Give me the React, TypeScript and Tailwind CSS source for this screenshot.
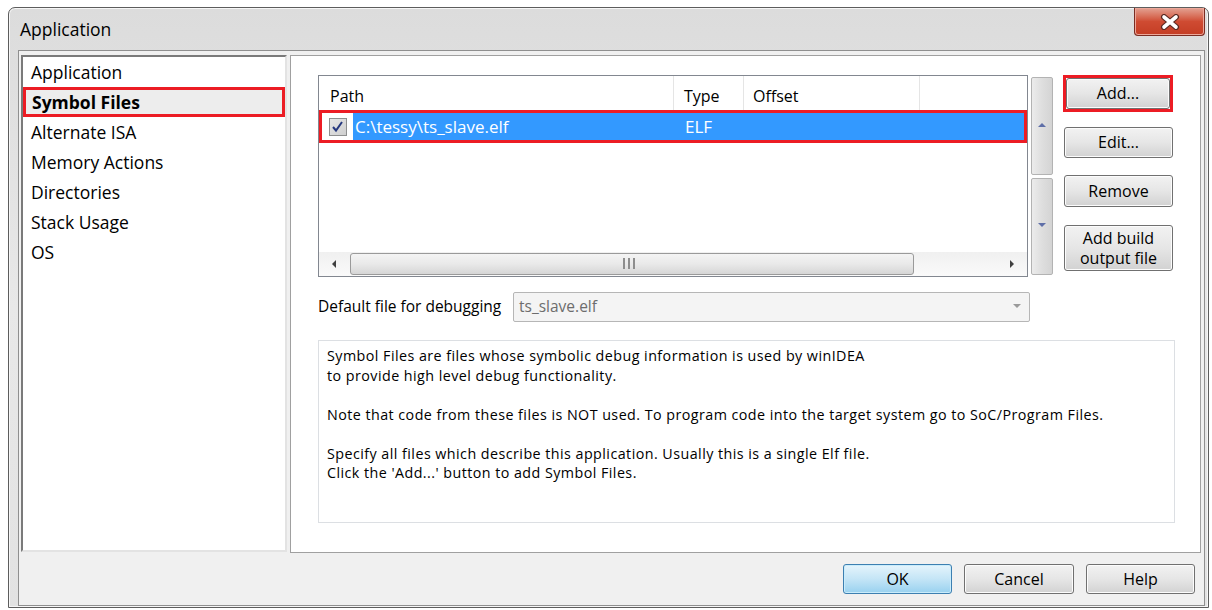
import React from 'react';

const pages = [
  'Application',
  'Symbol Files',
  'Alternate ISA',
  'Memory Actions',
  'Directories',
  'Stack Usage',
  'OS',
];

const helpLines = [
  'Symbol Files are files whose symbolic debug information is used by winIDEA',
  'to provide high level debug functionality.',
  '',
  'Note that code from these files is NOT used. To program code into the target system go to SoC/Program Files.',
  '',
  'Specify all files which describe this application. Usually this is a single Elf file.',
  "Click the 'Add...' button to add Symbol Files.",
];

const PushButton: React.FC<{ className?: string; children: React.ReactNode }> = ({
  className = '',
  children,
}) => (
  <button
    type="button"
    className={`flex items-center justify-center rounded-[3px] border border-[#707070] bg-gradient-to-b from-[#f2f2f2] via-[#e6e6e6] to-[#d2d2d2] text-[16px] leading-[19px] text-black shadow-[inset_0_0_0_1px_#fcfcfc] ${className}`}
  >
    {children}
  </button>
);

const CloseGlyph = () => (
  <svg width="22" height="16" viewBox="0 0 22 16">
    <path d="M5 3 L17 13 M17 3 L5 13" stroke="#5a2a22" strokeWidth="6" strokeLinecap="round" />
    <path d="M5 3 L17 13 M17 3 L5 13" stroke="#ffffff" strokeWidth="3.6" strokeLinecap="round" />
  </svg>
);

const Triangle: React.FC<{ dir: 'up' | 'down' | 'left' | 'right'; color: string }> = ({ dir, color }) => {
  const points = {
    up: '0,5 4,1 8,5',
    down: '0,1 4,5 8,1',
    left: '5,0 1,4 5,8',
    right: '1,0 5,4 1,8',
  }[dir];
  return (
    <svg width="8" height="8" viewBox="0 0 8 8">
      <polygon points={points} fill={color} />
    </svg>
  );
};

const SymbolTable = () => (
  <div className="flex h-[202px] w-[710px] flex-col border border-[#828790] bg-white">
    {/* column header */}
    <div className="flex h-[34px] shrink-0 text-[16px] text-black">
      <div className="flex w-[355px] items-center border-r border-[#e5e5e5] pl-[11px] pt-[6px]">Path</div>
      <div className="flex w-[70px] items-center border-r border-[#e5e5e5] pl-[10px] pt-[6px]">Type</div>
      <div className="flex w-[176px] items-center border-r border-[#e5e5e5] pl-[9px] pt-[6px]">Offset</div>
      <div className="flex-1" />
    </div>
    {/* selected entry */}
    <div className="flex h-[33px] shrink-0 border-[3px] border-[#ec1c24]">
      <div className="flex w-[31px] items-center justify-center bg-white">
        <span className="flex h-[18px] w-[18px] items-center justify-center border border-[#8e8f8f] bg-gradient-to-br from-[#e6e6e6] to-[#cfcfcf]">
          <svg width="13" height="13" viewBox="0 0 13 13">
            <path d="M2 7 L5 10.5 L11 2" fill="none" stroke="#26387f" strokeWidth="2" />
          </svg>
        </span>
      </div>
      <div className="flex flex-1 items-center bg-[#3399ff] text-[17px] text-white">
        <span className="w-[321px] pl-[2px]">C:\tessy\ts_slave.elf</span>
        <span className="pl-[11px]">ELF</span>
      </div>
    </div>
    <div className="flex-1" />
    {/* horizontal scrollbar */}
    <div className="flex h-[24px] shrink-0 items-center bg-gradient-to-b from-[#f0f0f0] to-[#fafafa]">
      <div className="flex w-[31px] items-center justify-center">
        <Triangle dir="left" color="#404040" />
      </div>
      <div className="relative h-[22px] w-[564px] rounded-[3px] border border-[#9a9a9a] bg-gradient-to-b from-[#f4f4f4] via-[#e9e9e9] to-[#d6d6d6]">
        <span className="absolute left-[272px] top-[4px] h-[11px] w-[12px] border-x-[2px] border-[#8d8d8d] after:absolute after:left-[3px] after:top-0 after:h-[11px] after:w-[2px] after:bg-[#8d8d8d]" />
      </div>
      <div className="flex-1" />
      <div className="flex w-[28px] items-center justify-center">
        <Triangle dir="right" color="#404040" />
      </div>
    </div>
  </div>
);

const Spinner = () => (
  <div className="ml-[3px] mt-[2px] flex h-[198px] w-[22px] flex-col gap-[3px]">
    <div className="flex flex-1 items-center justify-center rounded-[2px] border border-[#b3b3b3] bg-gradient-to-r from-[#ececec] via-[#dedede] to-[#d4d4d4]">
      <Triangle dir="up" color="#5f6fa8" />
    </div>
    <div className="flex flex-1 items-center justify-center rounded-[2px] border border-[#b3b3b3] bg-gradient-to-r from-[#ececec] via-[#dedede] to-[#d4d4d4]">
      <Triangle dir="down" color="#5f6fa8" />
    </div>
  </div>
);

export default function App() {
  return (
    <div className="h-[610px] w-[1212px] overflow-hidden bg-white pl-[8px] pt-[7px] font-['Open_Sans',sans-serif]">
      <div className="flex h-[601px] w-[1201px] flex-col rounded-t-[7px] border border-[#5d5d5d] bg-gradient-to-b from-[#dcdcdc] via-[#e8e8e8] to-[#e2e2e2] shadow-[inset_0_0_0_1px_#f6f6f6]">
        {/* caption */}
        <div className="flex h-[42px] shrink-0 items-start justify-between pl-[11px] pr-[3px]">
          <span className="mt-[10px] text-[17.5px] leading-[22px] text-black">Application</span>
          <div className="flex h-[28px] w-[71px] items-center justify-center rounded-b-[4px] border border-t-0 border-[#7a2c22] bg-gradient-to-b from-[#e2a192] via-[#cf4b32] to-[#c43d24] shadow-[inset_0_0_0_1px_#eca89a]">
            <CloseGlyph />
          </div>
        </div>

        {/* client */}
        <div className="ml-[9px] mr-[3px] flex h-[556px] flex-col border border-[#8f8f8f] bg-[#f0f0f0]">
          <div className="flex h-[502px] gap-[3px] pl-[2px] pr-[3px] pt-[4px]">
            {/* page list */}
            <div className="flex h-[497px] w-[266px] flex-col border-2 border-b-[#e3e3e3] border-l-[#7a7a7a] border-r-[#e3e3e3] border-t-[#7a7a7a] bg-white">
              {pages.map((page) =>
                page === 'Symbol Files' ? (
                  <div
                    key={page}
                    className="flex h-[30px] items-center border-[3px] border-[#ec1c24] bg-[#ededed] pl-[6px] text-[17.5px] font-bold text-black"
                  >
                    {page}
                  </div>
                ) : (
                  <div key={page} className="flex h-[30px] items-center pl-[8px] text-[17.5px] text-black">
                    {page}
                  </div>
                )
              )}
            </div>

            {/* page body */}
            <div className="flex h-[498px] flex-1 flex-col border border-[#a0a0a0] bg-white pl-[27px] pt-[19px]">
              <div className="flex">
                <SymbolTable />
                <Spinner />
                <div className="ml-[10px] flex w-[110px] flex-col">
                  <div className="flex h-[37px] items-center justify-center border-[3px] border-[#ec1c24]">
                    <PushButton className="h-[31px] w-[104px]">Add...</PushButton>
                  </div>
                  <PushButton className="ml-[1px] mt-[15px] h-[31px] w-[109px]">Edit...</PushButton>
                  <PushButton className="ml-[1px] mt-[17px] h-[32px] w-[109px]">Remove</PushButton>
                  <PushButton className="ml-[1px] mt-[18px] h-[46px] w-[109px] text-center leading-[20px]">
                    Add build
                    <br />
                    output file
                  </PushButton>
                </div>
              </div>

              <div className="mt-[15px] flex h-[30px] items-center">
                <span className="w-[195px] text-[15.5px] text-black">Default file for debugging</span>
                <div className="flex h-[30px] w-[517px] items-center justify-between rounded-[2px] border border-[#b6b6b6] bg-[#f4f4f4] pl-[5px] pr-[8px] text-[15.5px] text-[#6d6d6d]">
                  <span>ts_slave.elf</span>
                  <Triangle dir="down" color="#9a9a9a" />
                </div>
              </div>

              <div className="mt-[18px] h-[183px] w-[857px] border border-[#dcdfe3] bg-white pl-[8px] pt-[5px] text-[14.3px] leading-[19.5px] tracking-[0.45px] text-black">
                {helpLines.map((line, i) => (
                  <div key={i} className="h-[19.5px] whitespace-pre">
                    {line}
                  </div>
                ))}
              </div>
            </div>
          </div>

          {/* dialog buttons */}
          <div className="mt-[11px] flex justify-end gap-[12px] pr-[9px]">
            <button
              type="button"
              className="h-[30px] w-[109px] rounded-[3px] border border-[#3c7fb1] bg-gradient-to-b from-[#e5f4fc] via-[#c4e5f6] to-[#98d1ef] text-[16px] text-black shadow-[inset_0_0_0_1px_#c9ecfb]"
            >
              OK
            </button>
            <PushButton className="h-[30px] w-[110px]">Cancel</PushButton>
            <PushButton className="h-[30px] w-[109px]">Help</PushButton>
          </div>
        </div>
      </div>
    </div>
  );
}
